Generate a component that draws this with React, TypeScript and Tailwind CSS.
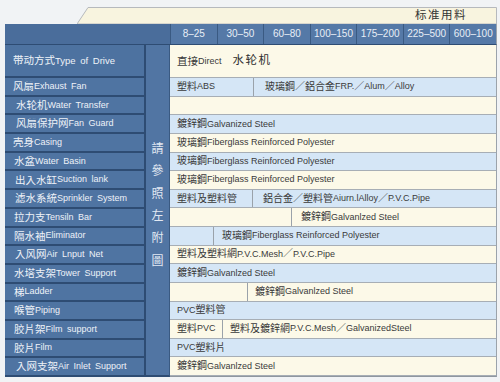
import React from "react";

const CJK_RE = /([\u2E80-\u9FFF\uFF00-\uFFEF]+)/;

function Mixed({
  text,
  cjk = "text-[10px]",
  latin = "text-[9px]",
}: {
  text: string;
  cjk?: string;
  latin?: string;
}) {
  const parts = text.split(CJK_RE).filter(Boolean);
  return (
    <>
      {parts.map((p, i) =>
        CJK_RE.test(p) ? (
          <span key={i} className={cjk}>
            {p}
          </span>
        ) : (
          <span key={i} className={latin}>
            {p}
          </span>
        )
      )}
    </>
  );
}

type Cell = { w?: string; text?: string; pl?: string };
type Row = { blue: boolean; cells: Cell[] };

const FRP = "玻璃鋼Fiberglass Reinforced Polyester";

const rows: Row[] = [
  { blue: true, cells: [{ w: "w-[83px]", text: "塑料ABS" }, { text: "玻璃鋼／鋁合金FRP.／Alum／Alloy", pl: "pl-[11px]" }] },
  { blue: false, cells: [{}] },
  { blue: true, cells: [{ text: "鍍鋅鋼Galvanized Steel" }] },
  { blue: false, cells: [{ text: FRP }] },
  { blue: true, cells: [{ text: FRP }] },
  { blue: false, cells: [{ text: FRP }] },
  { blue: true, cells: [{ w: "w-[82px]", text: "塑料及塑料管" }, { text: "鋁合金／塑料管Aiurn.lAlloy／P.V.C.Pipe", pl: "pl-[10px]" }] },
  { blue: false, cells: [{ w: "w-[121px]" }, { text: "鍍鋅鋼Galvanlzed Steel", pl: "pl-[9px]" }] },
  { blue: true, cells: [{ w: "w-[43px]" }, { text: FRP, pl: "pl-[8px]" }] },
  { blue: false, cells: [{ text: "塑料及塑料網P.V.C.Mesh／P.V.C.Pipe" }] },
  { blue: true, cells: [{ text: "鍍鋅鋼Galvanlzed Steel" }] },
  { blue: false, cells: [{ w: "w-[77px]" }, { text: "鍍鋅鋼Galvanlzed Steel" }] },
  { blue: true, cells: [{ text: "PVC塑料管" }] },
  { blue: false, cells: [{ w: "w-[52px]", text: "塑料PVC" }, { text: "塑料及鍍鋅網P.V.C.Mesh／GalvanizedSteel" }] },
  { blue: true, cells: [{ text: "PVC塑料片" }] },
  { blue: false, cells: [{ text: "鍍鋅鋼Galvanlzed Steel" }] },
];

const labels: { text: string; pl: string }[] = [
  { text: "风扇Exhaust Fan", pl: "pl-[8px]" },
  { text: "水轮机 Water Transfer", pl: "pl-[11px]" },
  { text: "风扇保护网Fan Guard", pl: "pl-[11px]" },
  { text: "壳身Casing", pl: "pl-[8px]" },
  { text: "水盆Water Basin", pl: "pl-[9px]" },
  { text: "出入水缸Suction lank", pl: "pl-[10px]" },
  { text: "滤水系統Sprinkler System", pl: "pl-[10px]" },
  { text: "拉力支Tensiln Bar", pl: "pl-[9px]" },
  { text: "隔水袖Eliminator", pl: "pl-[9px]" },
  { text: "入风网Air Lnput Net", pl: "pl-[10px]" },
  { text: "水塔支架Tower Support", pl: "pl-[9px]" },
  { text: "梯Ladder", pl: "pl-[9px]" },
  { text: "喉管Piping", pl: "pl-[9px]" },
  { text: "胶片架Film support", pl: "pl-[9px]" },
  { text: "胶片Film", pl: "pl-[9px]" },
  { text: "入网支架Air Inlet Support", pl: "pl-[11px]" },
];

const sizes = ["8–25", "30–50", "60–80", "100–150", "175–200", "225–500", "600–100"];

export default function App() {
  return (
    <div className="w-[500px] h-[382px] overflow-hidden bg-[#f1f3f5] font-['Liberation_Sans','Noto_Sans_CJK_TC','Noto_Sans_CJK_SC',sans-serif] leading-none">
      {/* tab */}
      <div className="pt-[7px] pl-[77px] pr-[3px]">
        <div className="relative h-[17px] flex items-center justify-end pr-[30px]">
          <svg
            className="absolute inset-0 w-full h-full"
            viewBox="0 0 420 17"
            preserveAspectRatio="none"
          >
            <polygon
              points="11,0.5 419.5,0.5 419.5,17 0,17"
              fill="#f8f4df"
              stroke="#b6b9bd"
              strokeWidth="1"
            />
          </svg>
          <span className="relative text-[11.5px] tracking-[1.5px] text-[#333333]">
            标准用料
          </span>
        </div>
      </div>

      {/* table */}
      <div className="ml-[5px] w-[492px] flex flex-col">
        {/* header row */}
        <div className="h-[21px] flex">
          <div className="w-[165px] bg-[#4a6d9b] border-b border-[#2e4c73]" />
          <div className="flex-1 flex bg-[#5579a7] border-b border-[#2e4c73] border-r border-r-[#9ba3ab]">
            {sizes.map((s, i) => (
              <div
                key={i}
                className="flex-1 flex items-center justify-center border-l border-[#3a5a82] text-[10px] text-[#e8eef6]"
              >
                {s}
              </div>
            ))}
          </div>
        </div>

        {/* body */}
        <div className="h-[332px] flex">
          {/* labels */}
          <div className="w-[141px] flex flex-col border-r-2 border-[#2e4c73] [word-spacing:2px]">
            <div className="h-[33px] flex items-center pl-[8px] bg-[#4d72a0] border-b-2 border-[#2e4c73] text-[#eef2f8]">
              <Mixed text="带动方式Type of Drive" cjk="text-[10.5px]" latin="text-[9.5px]" />
            </div>
            {labels.map((l, i) => (
              <div
                key={i}
                className={`flex-1 flex items-center ${l.pl} bg-[#4f74a2] border-b-2 border-[#2e4c73] text-[#eef2f8]`}
              >
                <Mixed text={l.text} cjk="text-[10.5px]" latin="text-[9px]" />
              </div>
            ))}
          </div>

          {/* vertical note */}
          <div className="w-[24px] flex flex-col items-center justify-center pb-[10px] bg-[#5175a3] border-r border-[#3a5a82] border-b-2 border-b-[#2e4c73] text-[12px] leading-[22.4px] text-[#e2e9f3]">
            {"請參照左附圖".split("").map((c, i) => (
              <span key={i}>{c}</span>
            ))}
          </div>

          {/* content */}
          <div className="flex-1 flex flex-col border-r border-[#9ba3ab] border-b border-b-[#8f979f] text-[#3a3a3a]">
            <div className="h-[33px] flex items-center pl-[7px] bg-[#fcf9e8] border-b border-[#a7aeb5]">
              <Mixed text="直接Direct" cjk="text-[10.5px]" latin="text-[9px]" />
              <span className="ml-[11px] text-[11.5px] tracking-[1.5px] text-[#2e2e2e]">水轮机</span>
            </div>
            {rows.map((r, i) => (
              <div
                key={i}
                className={`flex-1 flex border-b border-[#a7aeb5] ${r.blue ? "bg-[#d5e6f6]" : "bg-[#fcf9e8]"}`}
              >
                {r.cells.map((c, j) => (
                  <div
                    key={j}
                    className={`${c.w ? c.w : "flex-1"} flex items-center ${c.pl ? c.pl : "pl-[7px]"} ${j > 0 ? "border-l border-[#9aa2aa]" : ""} whitespace-nowrap`}
                  >
                    {c.text ? <Mixed text={c.text} /> : null}
                  </div>
                ))}
              </div>
            ))}
          </div>
        </div>
      </div>
    </div>
  );
}
